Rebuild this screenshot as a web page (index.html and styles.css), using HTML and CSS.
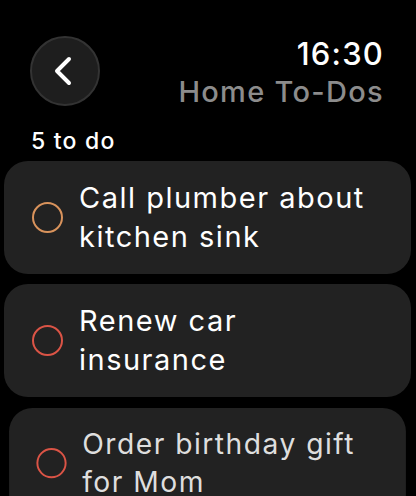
FILE: index.html
```html
<!DOCTYPE html>
<html>
<head>
<title>Home To-Dos</title>
<link rel="stylesheet" href="styles.css">
</head>
<body>
  <div class="screen">
    <header class="top">
      <button class="back" aria-label="Back">
        <svg viewBox="0 0 20 30" width="20" height="30">
          <path d="M16 3 L4 15 L16 27" fill="none" stroke="#fff" stroke-width="4" stroke-linecap="round" stroke-linejoin="round"/>
        </svg>
      </button>
      <div class="titles">
        <div class="time">16:30</div>
        <div class="title">Home To-Dos</div>
      </div>
    </header>

    <div class="count">5 to do</div>

    <ul class="list">
      <li class="item">
        <span class="check orange"></span>
        <span class="label">Call plumber about kitchen sink</span>
      </li>
      <li class="item">
        <span class="check red"></span>
        <span class="label">Renew car insurance</span>
      </li>
      <li class="item far">
        <span class="check red"></span>
        <span class="label">Order birthday gift for Mom</span>
      </li>
    </ul>
  </div>
</body>
</html>
```

FILE: styles.css
```css
/* watch style to-do list */
html, body { margin: 0; background: #000; }
body { font-family: Inter, "Noto Sans", sans-serif; color: #fff; }

.screen { width: 416px; height: 496px; overflow: hidden; }

.top {
  display: flex; justify-content: space-between; align-items: flex-start;
  padding: 36px 33px 0 30px;
}
.back {
  width: 70px; height: 70px; border-radius: 50%;
  background: #1e1e1e; border: 2px solid #333; box-sizing: border-box;
  display: flex; align-items: center; justify-content: center;
  padding: 0 4px 0 0; margin: 0;
}
.titles { text-align: right; }
.time { font-size: 31px; font-weight: 500; line-height: 36px; letter-spacing: 1.2px; margin-right: -1px; }
.title { font-size: 29px; font-weight: 500; color: #8c8c8c; line-height: 36px; margin-top: 2px; letter-spacing: 1.3px; margin-right: -1px; }

.count { font-size: 23px; font-weight: 500; padding: 18px 0 0 31px; line-height: 26px; letter-spacing: 1.2px; }

.list { list-style: none; margin: 7px 0 0; padding: 0 5px 0 4px; display: flex; flex-direction: column; gap: 10px; }
.item {
  background: #222; border-radius: 24px;
  display: flex; align-items: center; gap: 16px;
  padding: 17px 20px 18px 28px; min-height: 70px;
}
.item.far { transform: scale(0.975); transform-origin: top center; color: #dedede; margin-top: 1px; }
.check {
  flex: none; width: 27px; height: 27px; border-radius: 50%;
  border: 2.5px solid; box-sizing: content-box;
}
.check.orange { border-color: #d9935c; }
.check.red { border-color: #db5446; }
.label { font-size: 29px; line-height: 39px; font-weight: 400; letter-spacing: 1.5px; max-width: 300px; }
```
